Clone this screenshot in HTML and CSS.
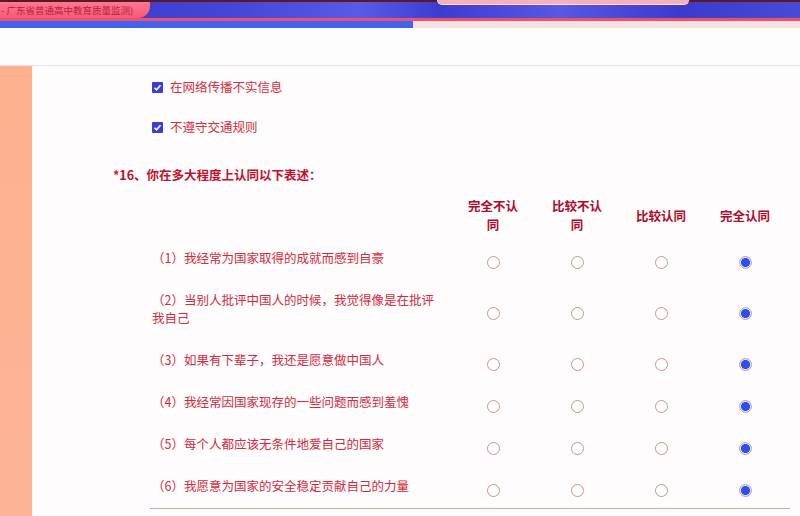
FILE: index.html
```html
<!DOCTYPE html>
<html lang="zh-CN">
<head>
<meta charset="utf-8">
<title>广东省普通高中教育质量监测</title>
<link rel="stylesheet" href="styles.css">
</head>
<body>
<div class="chrome">
  <div class="chrome-top"><div class="addr"></div></div>
  <div class="tabbar">
    <div class="tab">- 广东省普通高中教育质量监测)</div>
    <div class="tabfill"></div>
  </div>
  <div class="redline"></div>
  <div class="progress"><div class="progress-bar"></div></div>
</div>
<div class="pagehead"></div>
<div class="main">
  <div class="sidebar"></div>
  <div class="content">
    <div class="checks">
      <div class="check-item"><span class="cb"><svg viewBox="0 0 11 11" width="11" height="11"><path d="M2.5 5.8 L4.5 7.8 L8.5 3.3" fill="none" stroke="#fff" stroke-width="1.6"/></svg></span><span class="cb-label">在网络传播不实信息</span></div>
      <div class="check-item"><span class="cb"><svg viewBox="0 0 11 11" width="11" height="11"><path d="M2.5 5.8 L4.5 7.8 L8.5 3.3" fill="none" stroke="#fff" stroke-width="1.6"/></svg></span><span class="cb-label">不遵守交通规则</span></div>
    </div>
    <div class="q-title"><span class="star">*</span>16、你在多大程度上认同以下表述：</div>
    <div class="matrix">
      <div class="mh"></div>
      <div class="mh"><span class="mh-text">完全不认同</span></div>
      <div class="mh"><span class="mh-text">比较不认同</span></div>
      <div class="mh"><span class="mh-text">比较认同</span></div>
      <div class="mh"><span class="mh-text">完全认同</span></div>

      <div class="mq">（1）我经常为国家取得的成就而感到自豪</div>
      <div class="mc"><span class="radio"></span></div>
      <div class="mc"><span class="radio"></span></div>
      <div class="mc"><span class="radio"></span></div>
      <div class="mc"><span class="radio on"></span></div>

      <div class="mq">（2）当别人批评中国人的时候，我觉得像是在批评我自己</div>
      <div class="mc"><span class="radio"></span></div>
      <div class="mc"><span class="radio"></span></div>
      <div class="mc"><span class="radio"></span></div>
      <div class="mc"><span class="radio on"></span></div>

      <div class="mq">（3）如果有下辈子，我还是愿意做中国人</div>
      <div class="mc"><span class="radio"></span></div>
      <div class="mc"><span class="radio"></span></div>
      <div class="mc"><span class="radio"></span></div>
      <div class="mc"><span class="radio on"></span></div>

      <div class="mq">（4）我经常因国家现存的一些问题而感到羞愧</div>
      <div class="mc"><span class="radio"></span></div>
      <div class="mc"><span class="radio"></span></div>
      <div class="mc"><span class="radio"></span></div>
      <div class="mc"><span class="radio on"></span></div>

      <div class="mq">（5）每个人都应该无条件地爱自己的国家</div>
      <div class="mc"><span class="radio"></span></div>
      <div class="mc"><span class="radio"></span></div>
      <div class="mc"><span class="radio"></span></div>
      <div class="mc"><span class="radio on"></span></div>

      <div class="mq">（6）我愿意为国家的安全稳定贡献自己的力量</div>
      <div class="mc"><span class="radio"></span></div>
      <div class="mc"><span class="radio"></span></div>
      <div class="mc"><span class="radio"></span></div>
      <div class="mc"><span class="radio on"></span></div>
    </div>
    <div class="bottom-line"></div>
  </div>
</div>
</body>
</html>
```

FILE: styles.css
```css
* { box-sizing: border-box; }
html, body {
  margin: 0;
  padding: 0;
  width: 800px;
  height: 516px;
  overflow: hidden;
  background: #fefcfc;
  font-family: "Noto Sans CJK SC", "Noto Sans", sans-serif;
}
.chrome { position: relative; }
.chrome-top {
  height: 2px;
  background: #5a1a24;
  position: relative;
}
.addr {
  position: absolute;
  left: 437px;
  top: 0;
  width: 252px;
  height: 5px;
  background: #f4b0bc;
  border: 1px solid #ffd8e0;
  border-top: none;
  border-radius: 0 0 6px 6px;
  z-index: 2;
}
.tabbar {
  display: flex;
  height: 16px;
  background: linear-gradient(90deg, #3434c4 0%, #4646d8 30%, #5a5ae8 45%, #3c3cd0 55%, #5858e4 70%, #3a3acc 85%, #4a4ad8 100%);
}
.tab {
  width: 150px;
  height: 16px;
  background: linear-gradient(180deg, #ff7890 0%, #f45a78 100%);
  border-radius: 0 0 12px 0;
  color: #b8203c;
  font-size: 9.5px;
  line-height: 16px;
  white-space: nowrap;
  padding-left: 1px;
}
.tabfill { flex: 1; }
.redline {
  height: 3px;
  background: #f0506a;
}
.progress {
  height: 7px;
  background: #f2e2e2;
}
.progress-bar {
  width: 413px;
  height: 7px;
  background: #4262f0;
}
.pagehead {
  height: 37px;
  background: #fefdfd;
}
.main {
  display: flex;
  border-top: 1px solid #f6dcdc;
  height: 451px;
}
.sidebar {
  width: 32px;
  background: linear-gradient(180deg, #fdb08e 0%, #fdb496 100%);
}
.content {
  flex: 1;
  background: #fefcfc;
  padding-top: 11px;
}
.checks { padding-left: 120px; }
.check-item {
  display: flex;
  align-items: center;
  height: 20px;
  margin-bottom: 20px;
}
.cb {
  width: 11px;
  height: 11px;
  background: #3a3ed8;
  border-radius: 1px;
  display: inline-flex;
  margin-right: 7px;
}
.cb svg { display: block; }
.cb-label {
  color: #d42e40;
  font-size: 12.5px;
  line-height: 20px;
}
.q-title {
  margin-top: 28px;
  padding-left: 81px;
  color: #c2102c;
  font-size: 12.5px;
  font-weight: bold;
  line-height: 20px;
}
.star { color: #e8102a; }
.matrix {
  margin-top: 11px;
  margin-left: 120px;
  display: grid;
  grid-template-columns: 299px repeat(4, 84px);
}
.mh {
  height: 41px;
  padding-bottom: 3px;
  display: flex;
  align-items: center;
  justify-content: center;
}
.mh-text {
  display: block;
  width: 52px;
  text-align: center;
  color: #b00a28;
  font-weight: bold;
  font-size: 12.5px;
  line-height: 19px;
}
.mq {
  padding: 12px 7px 12px 0;
  color: #d42a3c;
  font-size: 12.5px;
  line-height: 18px;
}
.mc {
  display: flex;
  align-items: center;
  justify-content: center;
  padding-top: 8px;
}
.radio {
  width: 13px;
  height: 13px;
  border: 1px solid #c8948c;
  border-radius: 50%;
  background: #fff;
  display: block;
}
.radio.on {
  border: 1px solid #c89aa6;
  background: radial-gradient(circle, #2a50f0 0 4.2px, #e8e4f4 4.8px);
}
.bottom-line {
  margin-top: 1px;
  margin-left: 118px;
  width: 640px;
  height: 1px;
  background: #d8a8a0;
}
```
